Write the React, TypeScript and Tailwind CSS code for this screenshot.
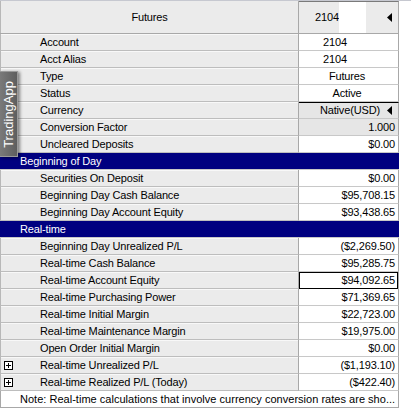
import React from "react";

type Row =
  | { kind: "section"; label: string }
  | {
      kind: "row";
      label: string;
      value: string;
      align?: "left" | "center" | "right";
      gray?: boolean;
      boxed?: boolean;
      topLine?: boolean;
      arrow?: boolean;
      expand?: boolean;
      redact?: boolean;
    };

const rows: Row[] = [
  { kind: "row", label: "Account", value: "2104", redact: true },
  { kind: "row", label: "Acct Alias", value: "2104", redact: true },
  { kind: "row", label: "Type", value: "Futures", align: "center" },
  { kind: "row", label: "Status", value: "Active", align: "center" },
  { kind: "row", label: "Currency", value: "Native(USD)", gray: true, topLine: true, arrow: true },
  { kind: "row", label: "Conversion Factor", value: "1.000", gray: true },
  { kind: "row", label: "Uncleared Deposits", value: "$0.00" },
  { kind: "section", label: "Beginning of Day" },
  { kind: "row", label: "Securities On Deposit", value: "$0.00" },
  { kind: "row", label: "Beginning Day Cash Balance", value: "$95,708.15" },
  { kind: "row", label: "Beginning Day Account Equity", value: "$93,438.65" },
  { kind: "section", label: "Real-time" },
  { kind: "row", label: "Beginning Day Unrealized P/L", value: "($2,269.50)" },
  { kind: "row", label: "Real-time Cash Balance", value: "$95,285.75" },
  { kind: "row", label: "Real-time Account Equity", value: "$94,092.65", boxed: true },
  { kind: "row", label: "Real-time Purchasing Power", value: "$71,369.65" },
  { kind: "row", label: "Real-time Initial Margin", value: "$22,723.00" },
  { kind: "row", label: "Real-time Maintenance Margin", value: "$19,975.00" },
  { kind: "row", label: "Open Order Initial Margin", value: "$0.00" },
  { kind: "row", label: "Real-time Unrealized P/L", value: "($1,193.10)", expand: true },
  { kind: "row", label: "Real-time Realized P/L (Today)", value: "($422.40)", expand: true },
];

function Arrow() {
  return (
    <svg width="5" height="9" viewBox="0 0 5 9" className="shrink-0">
      <path d="M5 0 L0 4.5 L5 9 Z" fill="#000" />
    </svg>
  );
}

function Expander() {
  return (
    <svg width="9" height="9" viewBox="0 0 9 9" className="shrink-0">
      <rect x="0.5" y="0.5" width="8" height="8" fill="#fff" stroke="#000" />
      <path d="M2 4.5 H7 M4.5 2 V7" stroke="#000" />
    </svg>
  );
}

export default function App() {
  return (
    <div
      className="relative w-[411px] h-[413px] bg-white overflow-hidden text-[11px] tracking-[-0.15px] leading-none text-black"
      style={{ fontFamily: '"Liberation Sans", Arial, sans-serif' }}
    >
      <div className="h-px bg-[#c6c8d0]" />
      {/* Header */}
      <div className="flex h-[33px] w-[399px] border-b border-[#a8a8a8]">
        <div className="w-[299px] flex items-center justify-center bg-[#ebebeb] border-r border-[#a8a8a8] border-l border-l-[#b8b8b8]">
          Futures
        </div>
        <div className="w-[100px] flex items-center bg-[#ebebeb] border-t border-[#7a7a7a] border-r border-r-[#a8a8a8]">
          <span className="pl-[16px]">2104</span>
          <span className="self-stretch w-[27px] bg-white" />
          <span className="flex-1" />
          <span className="pr-[6px] flex items-center">
            <Arrow />
          </span>
        </div>
      </div>

      {/* Rows */}
      {rows.map((r, i) =>
        r.kind === "section" ? (
          <div
            key={i}
            className="h-[17px] w-[399px] bg-[#000080] text-white flex items-center pl-[20px] border-b border-[#c8c8c8]"
          >
            {r.label}
          </div>
        ) : (
          <div key={i} className="flex h-[17px] w-[399px]">
            <div className="w-[299px] flex items-center bg-[#ebebeb] border-b border-[#bdbdbd] border-r border-r-[#a8a8a8] border-l border-l-[#b8b8b8] shadow-[inset_0_1px_0_#f8f8f8]">
              <div className="w-[39px] pl-[3px] flex items-center">
                {r.expand && <Expander />}
              </div>
              <span>{r.label}</span>
            </div>
            <div
              className={
                "w-[100px] flex items-center border-b border-[#c8c8c8] border-r border-r-[#a8a8a8] " +
                (r.gray ? "bg-[#e6e6e6] " : "bg-white ") +
                (r.topLine ? "border-t border-t-black " : "")
              }
            >
              {r.boxed ? (
                <div className="flex-1 h-[17px] -mb-px border border-black flex items-center justify-end pr-[2px]">
                  {r.value}
                </div>
              ) : r.arrow ? (
                <div className="flex-1 flex items-center justify-end gap-[7px] pr-[6px]">
                  <span>{r.value}</span>
                  <Arrow />
                </div>
              ) : r.redact ? (
                <div className="flex-1 pl-[24px]">{r.value}</div>
              ) : (
                <div
                  className={
                    "flex-1 pr-[3px] " +
                    (r.align === "center" ? "text-center pr-0" : "text-right")
                  }
                >
                  {r.value}
                </div>
              )}
            </div>
          </div>
        ),
      )}

      {/* Note */}
      <div className="h-[17px] w-[399px] flex items-center pl-[19px] bg-white border border-t-0 border-[#a8a8a8] whitespace-nowrap overflow-hidden tracking-[0.02px]">
        Note: Real-time calculations that involve currency conversion rates are sho...
      </div>

      {/* TradingApp side tab */}
      <div className="absolute left-0 top-[71px] w-[18px] h-[86px] bg-[linear-gradient(to_right,#7a7a7a,#5e5e5e)] border border-l-0 border-[#9a9a9a] shadow-[2px_1px_3px_rgba(0,0,0,0.45)] flex items-center justify-center">
        <span className="-rotate-90 whitespace-nowrap text-white text-[13px] tracking-normal">
          TradingApp
        </span>
      </div>
    </div>
  );
}
